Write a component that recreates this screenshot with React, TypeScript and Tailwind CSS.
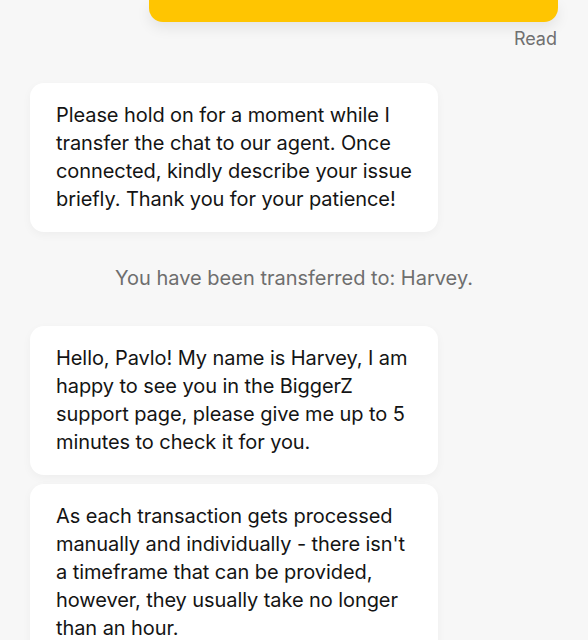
const font = { fontFamily: "Inter, 'Noto Sans', sans-serif" };

function Bubble({ lines, className = "" }: { lines: string[]; className?: string }) {
  return (
    <div
      className={`ml-[30px] w-[408px] rounded-[14px] bg-white px-[26px] pt-[18px] pb-[19px] text-[20px] leading-[28px] tracking-[-0.08px] text-[#141414] shadow-[0_3px_10px_rgba(0,0,0,0.04)] ${className}`}
    >
      {lines.map(l => (
        <div key={l} className="whitespace-nowrap">
          {l}
        </div>
      ))}
    </div>
  );
}

export default function App() {
  return (
    <div className="h-[640px] w-[588px] overflow-hidden bg-[#f7f7f7]" style={font}>
      <div className="flex justify-end pr-[30px]">
        <div className="h-[22px] w-[409px] rounded-b-[14px] bg-[#ffc501] shadow-[0_6px_14px_rgba(0,0,0,0.08)]" />
      </div>
      <div className="mt-[6px] pr-[31px] text-right text-[18px] leading-[22px] text-[#707070]">Read</div>

      <Bubble
        className="mt-[33px]"
        lines={[
          "Please hold on for a moment while I",
          "transfer the chat to our agent. Once",
          "connected, kindly describe your issue",
          "briefly. Thank you for your patience!",
        ]}
      />

      <div className="mt-[33px] text-center text-[20px] leading-[26px] text-[#6e6e6e]">
        You have been transferred to: Harvey.
      </div>

      <Bubble
        className="mt-[35px]"
        lines={[
          "Hello, Pavlo! My name is Harvey, I am",
          "happy to see you in the BiggerZ",
          "support page, please give me up to 5",
          "minutes to check it for you.",
        ]}
      />
      <Bubble
        className="mt-[9px]"
        lines={[
          "As each transaction gets processed",
          "manually and individually - there isn't",
          "a timeframe that can be provided,",
          "however, they usually take no longer",
          "than an hour.",
        ]}
      />
    </div>
  );
}
